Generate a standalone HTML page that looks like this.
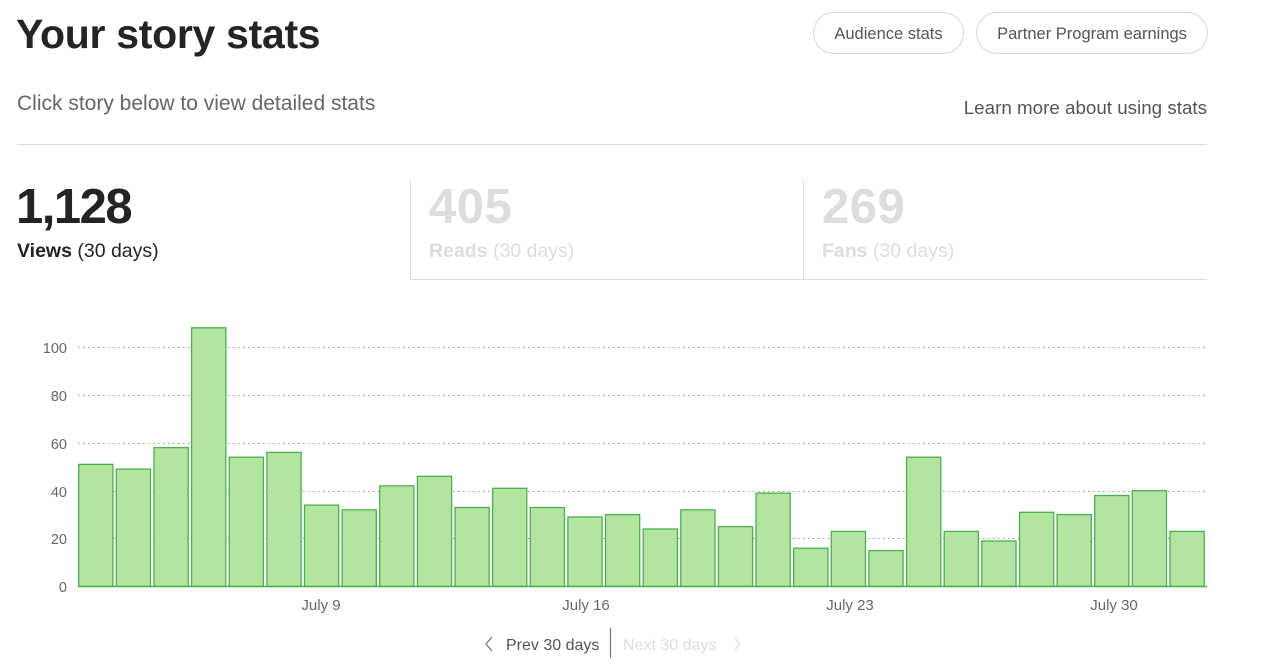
<!DOCTYPE html>
<html><head><meta charset="utf-8"><style>
body{margin:0;width:1280px;height:664px;background:#fff;font-family:"Liberation Sans",sans-serif;position:relative;overflow:hidden;color:#292929}
.a{position:absolute;white-space:nowrap}
.btn{position:absolute;top:12px;height:40px;border:1px solid #d6d6d6;border-radius:21px;font-size:16.5px;color:#555;line-height:42px;text-align:center}
</style></head><body>
<div class="a" style="left:16px;top:11px;font-size:41px;font-weight:bold;letter-spacing:-0.3px;color:#242424">Your story stats</div>
<div class="btn" style="left:813px;width:149px">Audience stats</div>
<div class="btn" style="left:976px;width:230px">Partner Program earnings</div>
<div class="a" style="left:17px;top:92px;font-size:21px;color:#666">Click story below to view detailed stats</div>
<div class="a" style="right:73px;top:97px;font-size:18.8px;color:#555">Learn more about using stats</div>
<div class="a" style="left:17px;top:144px;width:1190px;height:1px;background:#ddd"></div>
<div class="a" style="left:16px;top:179px;font-size:49px;font-weight:bold;letter-spacing:-1.5px;color:#242424">1,128</div>
<div class="a" style="left:17px;top:240px;font-size:19.5px;color:#242424"><b>Views</b> (30 days)</div>
<div class="a" style="left:410px;top:180px;width:1px;height:100px;background:#ddd"></div>
<div class="a" style="left:803px;top:180px;width:1px;height:100px;background:#ddd"></div>
<div class="a" style="left:410px;top:279px;width:797px;height:1px;background:#ddd"></div>
<div class="a" style="left:429px;top:179px;font-size:49px;font-weight:bold;letter-spacing:0.5px;color:#ddd">405</div>
<div class="a" style="left:429px;top:240px;font-size:19.5px;color:#ddd"><b>Reads</b> (30 days)</div>
<div class="a" style="left:822px;top:179px;font-size:49px;font-weight:bold;letter-spacing:0.5px;color:#ddd">269</div>
<div class="a" style="left:822px;top:240px;font-size:19.5px;color:#ddd"><b>Fans</b> (30 days)</div>
<svg class="a" style="left:0;top:0" width="1280" height="664" font-family="Liberation Sans, sans-serif">
<g stroke="#999" stroke-dasharray="1.5 3.5" stroke-width="1">
<line x1="78" x2="1207" y1="347.5" y2="347.5"/><line x1="78" x2="1207" y1="395.5" y2="395.5"/><line x1="78" x2="1207" y1="443.5" y2="443.5"/><line x1="78" x2="1207" y1="491.5" y2="491.5"/><line x1="78" x2="1207" y1="538.5" y2="538.5"/>
</g>
<g font-size="14.5" fill="#666" text-anchor="end">
<text x="67" y="353">100</text><text x="67" y="401">80</text><text x="67" y="449">60</text><text x="67" y="497">40</text><text x="67" y="544">20</text><text x="67" y="592">0</text>
</g>
<g id="bars" fill="#b3e5a0" stroke="#4caf50" stroke-width="1.3"></g>
<line x1="78" x2="1207" y1="586.5" y2="586.5" stroke="#4caf50" stroke-width="1.5"/>
<g font-size="15" fill="#666" text-anchor="middle">
<text x="321" y="610">July 9</text><text x="586" y="610">July 16</text><text x="850" y="610">July 23</text><text x="1114" y="610">July 30</text>
</g>
<path d="M492 637 l-6 7 l6 7" fill="none" stroke="#777" stroke-width="1.3"/>
<text x="506" y="650" font-size="16" fill="#555">Prev 30 days</text>
<line x1="610.5" x2="610.5" y1="628" y2="658" stroke="#777" stroke-width="1.2"/>
<text x="623" y="650" font-size="16" fill="#ddd">Next 30 days</text>
<path d="M734 637 l6 7 l-6 7" fill="none" stroke="#ddd" stroke-width="1.3"/>
</svg>
<script>
var v=[51,49,58,108,54,56,34,32,42,46,33,41,33,29,30,24,32,25,39,16,23,15,54,23,19,31,30,38,40,23];
var g=document.getElementById('bars'),s='';
v.forEach(function(d,i){var x=78.7+i*37.63,h=d*2.395;s+='<rect x="'+x.toFixed(1)+'" y="'+(586.5-h).toFixed(1)+'" width="34.2" height="'+h.toFixed(1)+'"/>';});
g.innerHTML=s;
</script>
</body></html>
